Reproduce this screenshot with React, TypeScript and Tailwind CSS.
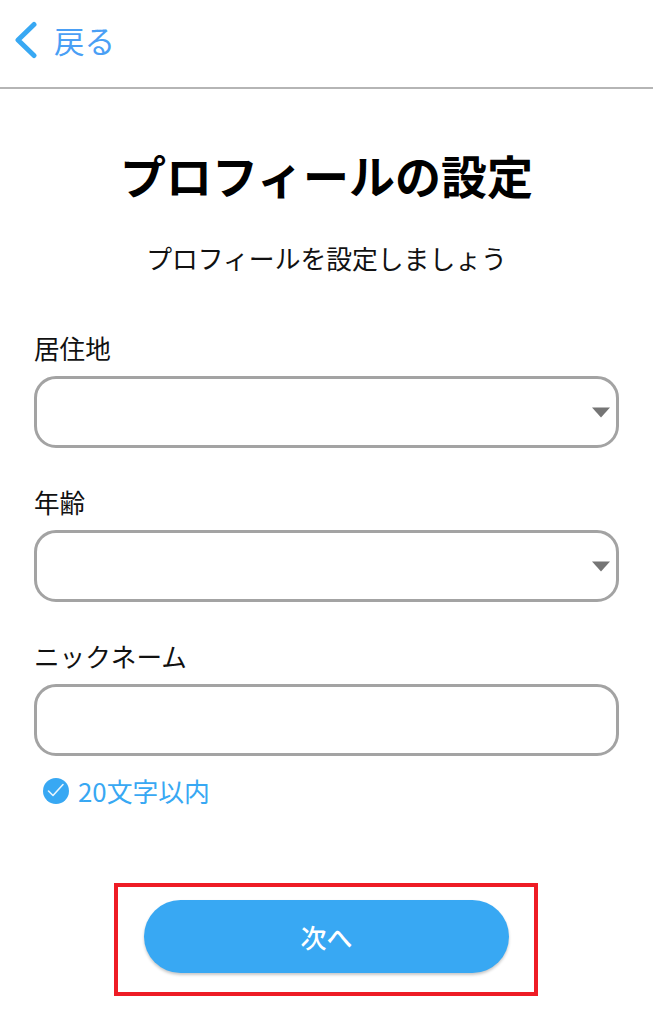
const font = { fontFamily: '"Noto Sans CJK JP", "Noto Sans", sans-serif' }

function Caret() {
  return (
    <svg className="absolute right-[5px] top-[28px]" width="20" height="11" viewBox="0 0 20 11">
      <path d="M1 0.5h18L10 10.5z" fill="#757575" />
    </svg>
  )
}

function Field({ label, select }: { label: string; select?: boolean }) {
  return (
    <div className="flex flex-col">
      <label className="h-[51px] text-[25.6px] leading-[46px] text-[#111]">{label}</label>
      <div className="relative h-[72px] rounded-[22px] border-[3px] border-[#a3a3a3] bg-white">
        {select && <Caret />}
      </div>
    </div>
  )
}

export default function App() {
  return (
    <div className="relative h-[1024px] w-[653px] overflow-hidden bg-white" style={font}>
      <header className="flex h-[89px] items-center gap-[16px] border-b-2 border-[#b5b5b5] pb-[7px] pl-[14px]">
        <svg width="24" height="38" viewBox="0 0 24 38">
          <path d="M20 3.5 4 19l16 15.500" fill="none" stroke="#38a8f3" strokeWidth="5" strokeLinecap="round" strokeLinejoin="round" />
        </svg>
        <span className="text-[30.500px] leading-none text-[#4a9ff5]">戻る</span>
      </header>

      <h1 className="mt-[56px] text-center text-[46px] leading-[58px] font-semibold text-black">プロフィールの設定</h1>
      <p className="mt-[36px] text-center text-[25.8px] leading-[38px] text-[#111]">プロフィールを設定しましょう</p>

      <main className="mt-[48px] ml-[34px] flex w-[585px] flex-col gap-[31px]">
        <Field label="居住地" select />
        <Field label="年齢" select />
        <Field label="ニックネーム" />
      </main>

      <div className="mt-[16px] ml-[43px] flex items-center gap-[9px]">
        <svg width="26" height="26" viewBox="0 0 26 26">
          <circle cx="13" cy="13" r="13" fill="#38a8f3" />
          <path d="M5.500 13 10 17.500 20 6.500" fill="none" stroke="#e8f5fe" strokeWidth="1.6" strokeLinecap="round" strokeLinejoin="round" />
        </svg>
        <span className="text-[25.8px] leading-[38px] text-[#38a8f3]">20文字以内</span>
      </div>

      <div className="mt-[90px] flex justify-center">
        <button className="h-[73px] w-[365px] rounded-full bg-[#38a8f3] text-[26px] font-medium text-white shadow-[0_2px_3px_rgba(0,0,0,0.22)]">
          次へ
        </button>
      </div>

      <div className="pointer-events-none absolute left-[114px] top-[883px] h-[113px] w-[424px] border-[4px] border-[#ee1c25]" />
    </div>
  )
}
